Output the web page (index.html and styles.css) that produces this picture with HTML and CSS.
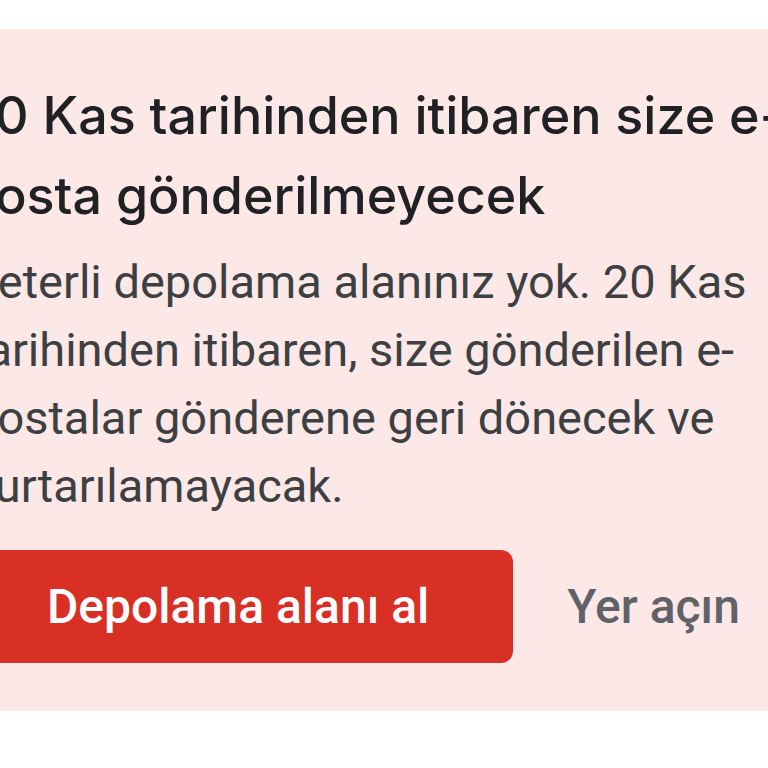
FILE: index.html
```html
<!DOCTYPE html>
<html lang="tr">
<head>
    <meta charset="UTF-8">
    <meta name="viewport" content="width=device-width, initial-scale=1.0">
    <title>Depolama uyarısı</title>
    <link rel="stylesheet" href="styles.css">
</head>
<body>
    <div class="banner">
        <div class="banner-inner">
            <h2 class="banner-title">20 Kas tarihinden itibaren size e-<br>posta gönderilmeyecek</h2>
            <p class="banner-text">Yeterli depolama alanınız yok. 20 Kas<br>tarihinden itibaren, size gönderilen e-<br>postalar gönderene geri dönecek ve<br>kurtarılamayacak.</p>
            <div class="banner-actions">
                <button class="btn-primary">Depolama alanı al</button>
                <button class="btn-text">Yer açın</button>
            </div>
        </div>
    </div>
</body>
</html>
```

FILE: styles.css
```css
body {
    margin: 0;
    padding: 0;
    background-color: #fff;
    font-family: Roboto, "Noto Sans", sans-serif;
    overflow: hidden;
}

.banner {
    margin-top: 29px;
    background-color: #fce8e6;
    padding: 47px 0 48px;
    overflow: hidden;
}

.banner-inner {
    margin-left: -29px;
    width: 860px;
}

.banner-title {
    margin: 0 0 0 -8px;
    font-family: Inter, "Open Sans", sans-serif;
    font-weight: 500;
    font-size: 52px;
    line-height: 80px;
    color: #202124;
    white-space: nowrap;
}

.banner-text {
    margin: 12px 0 0;
    font-size: 47px;
    line-height: 68px;
    color: #3c4043;
    white-space: nowrap;
}

.banner-actions {
    display: flex;
    align-items: center;
    margin-top: 30px;
}

.btn-primary {
    background-color: #d93025;
    color: #fff;
    border: none;
    border-radius: 12px;
    height: 113px;
    padding: 0 84px 0 76px;
    font-family: Roboto, sans-serif;
    font-weight: 500;
    font-size: 48px;
    cursor: pointer;
}

.btn-text {
    background: none;
    border: none;
    margin-left: 54px;
    padding: 0;
    color: #5f6368;
    font-family: Roboto, sans-serif;
    font-weight: 500;
    font-size: 48px;
    cursor: pointer;
}
```
